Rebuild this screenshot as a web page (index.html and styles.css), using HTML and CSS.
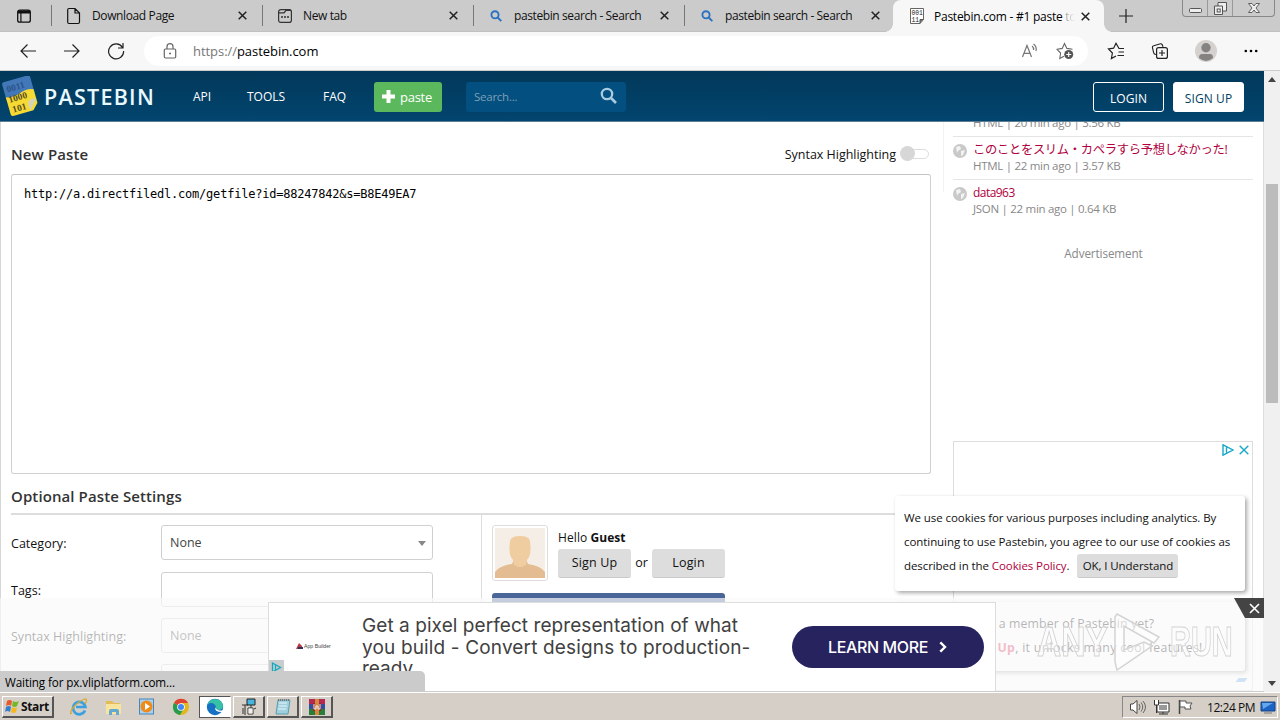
FILE: index.html
```html
<!DOCTYPE html>
<html lang="en">
<head>
<meta charset="utf-8">
<title>Pastebin.com - #1 paste tool</title>
<link rel="stylesheet" href="styles.css">
</head>
<body>
<div class="desktop">
  <div class="tabs">
    <svg class="tab-actions" width="16" height="16" viewBox="0 0 16 16"><rect x="1.700" y="2.200" width="12.600" height="12" rx="2" fill="none" stroke="#111" stroke-width="1.300"/><path d="M2 2.500h12v3H5.500V14H4.300V5.500H2z" fill="#111"/></svg>
    <div class="tab t1"><svg width="16" height="18" viewBox="0 0 16 18"><path d="M3 1.500h6l4.500 4.500v9q0 1.500-1.500 1.500h-9q-1.300 0-1.300-1.500V3q0-1.500 1.300-1.500zM9 1.700V6h4.500" fill="none" stroke="#111" stroke-width="1.200"/></svg><span class="tab-name">Download Page</span><svg class="x" width="9" height="9" viewBox="0 0 9 9"><path d="M.7.7l7.600 7.600M8.300.7L.7 8.300"/></svg></div>
    <div class="tab t2"><svg width="16" height="16" viewBox="0 0 16 16"><rect x="1.600" y="1.600" width="12.800" height="12.800" rx="2.200" fill="none" stroke="#333" stroke-width="1.200"/><path d="M2 4.800h5l2-2.500h5M4 9h2M7 9h2M10 9h2" fill="none" stroke="#333" stroke-width="1.300"/></svg><span class="tab-name">New tab</span><svg class="x" width="9" height="9" viewBox="0 0 9 9"><path d="M.7.7l7.600 7.600M8.300.7L.7 8.300"/></svg></div>
    <div class="tab t3"><svg width="16" height="16" viewBox="0 0 16 16"><circle cx="7" cy="6.800" r="3.600"/><path d="M9.700 9.500l3.600 3.600"/></svg><span class="tab-name">pastebin search - Search</span><svg class="x" width="9" height="9" viewBox="0 0 9 9"><path d="M.7.7l7.600 7.600M8.300.7L.7 8.300"/></svg></div>
    <div class="tab t3 t4"><svg width="16" height="16" viewBox="0 0 16 16"><circle cx="7" cy="6.800" r="3.600"/><path d="M9.700 9.500l3.600 3.600"/></svg><span class="tab-name">pastebin search - Search</span><svg class="x" width="9" height="9" viewBox="0 0 9 9"><path d="M.7.7l7.600 7.600M8.300.7L.7 8.300"/></svg></div>
    <div class="tab active"><svg width="16" height="16" viewBox="0 0 16 16"><path d="M1.500.5h13v11l-3.500 4h-9.500z" fill="#fff" stroke="#666"/><text x="2.400" y="7" class="bits">001</text><text x="2.400" y="13.500" class="bits">11</text><path d="M14.500 11.500h-3.500v4" fill="#777" stroke="#555"/></svg><span class="tab-name">Pastebin.com - #1 paste <i>to</i></span><svg class="x" width="9" height="9" viewBox="0 0 9 9"><path d="M.7.7l7.600 7.600M8.300.7L.7 8.300"/></svg></div>
    <svg class="plus" width="14" height="14" viewBox="0 0 14 14"><path d="M7 0v14M0 7h14" stroke="#222" stroke-width="1.200"/></svg>
    <div class="winbtns">
      <div class="wb"><svg width="13" height="5" viewBox="0 0 13 5"><rect x=".5" y=".5" width="12" height="4" rx="1" fill="#eee" stroke="#555"/></svg></div>
      <div class="wb"><svg width="13" height="13" viewBox="0 0 13 13"><path d="M4 .5h8.500v8.500H4z" fill="#eee" stroke="#555"/><path d="M.5 4h8v8.500h-8z" fill="#eee" stroke="#555"/><rect x="3.200" y="7" width="3" height="3" fill="none" stroke="#555"/></svg></div>
      <div class="wb wclose"><svg width="12" height="10" viewBox="0 0 12 10"><path d="M.5.5h3.500L6 3 8 .5h3.500L8 5l3.500 4.500H8L6 7 4 9.500H.5L4 5z" fill="#eee" stroke="#555" stroke-width=".9"/></svg></div>
    </div>
  </div>

  <div class="toolbar">
    <svg class="nav" width="18" height="16" viewBox="0 0 18 16"><path d="M8.500 1.500L2 8l6.500 6.500M2 8h15"/></svg>
    <svg class="nav" width="18" height="16" viewBox="0 0 18 16"><path d="M9.500 1.500L16 8l-6.500 6.500M16 8H1"/></svg>
    <svg class="nav" width="18" height="18" viewBox="0 0 18 18"><path d="M15.500 5.500A7.500 7.500 0 1 0 16.600 9M16 1v5h-5"/></svg>
    <div class="address">
      <svg class="lock" width="14" height="17" viewBox="0 0 14 17"><path d="M2.500 6h9q1.200 0 1.200 1.200v6.600q0 1.200-1.200 1.200h-9q-1.200 0-1.200-1.200V7.200Q1.300 6 2.500 6zM4 6V3.700a3 3 0 0 1 6 0V6" fill="none" stroke="#666" stroke-width="1.200"/><circle cx="7" cy="10.500" r="1" fill="#666"/></svg>
      <span class="url"><i>https://</i>pastebin.com</span>
      <svg class="aloud" width="18" height="16" viewBox="0 0 18 16"><path d="M1.500 14L6 2.500 10.500 14M3 10.300h6M11 3q2 1.500 1.500 4M12.500 1q3.500 2.500 2.500 7" fill="none" stroke="#777" stroke-width="1.200"/></svg>
      <svg width="18" height="18" viewBox="0 0 18 18"><path d="M8 14.300L3.800 16.500l.8-5.500L1 7.300l5.200-.9L8.500 1.500l2.400 4.900 5.600.9" fill="none" stroke="#666" stroke-width="1.100"/><circle cx="12.700" cy="12.500" r="4.500" fill="#555"/><path d="M12.700 10v5M10.200 12.500h5" stroke="#fff" stroke-width="1.100"/></svg>
    </div>
    <svg class="fav" width="18" height="18" viewBox="0 0 18 18"><path d="M17 6.500h-5L9 1.300 6.600 6.200 1.500 7l3.900 4-1 5.500L9 14M11.500 10H17M10.500 13.500H17" fill="none" stroke="#222" stroke-width="1.200"/></svg>
    <svg class="coll" width="18" height="18" viewBox="0 0 18 18"><path d="M5 12.500Q2.800 12.500 2.500 10L1.400 5.500Q1.200 4 2.700 3.700L9.500 1.800Q11.300 1.500 12 4.800" fill="none" stroke="#222" stroke-width="1.100"/><rect x="5.600" y="5.600" width="10.800" height="10.800" rx="2" fill="#f7f7f7" stroke="#222" stroke-width="1.200"/><path d="M11 8v6M8 11h6" stroke="#222" stroke-width="1.200"/></svg>
    <svg class="avatar" width="22" height="22" viewBox="0 0 22 22"><circle cx="11" cy="11" r="11" fill="#d4d1ce"/><circle cx="11" cy="7.800" r="4.700" fill="#858381"/><path d="M4 18q0-4 3-4h8q3 0 3 4-7 6-14 0z" fill="#858381"/></svg>
    <svg class="dots" width="14" height="4" viewBox="0 0 14 4"><circle cx="1.800" cy="2" r="1.300"/><circle cx="7" cy="2" r="1.300"/><circle cx="12.200" cy="2" r="1.300"/></svg>
  </div>

  <div class="browser">
    <div class="page">
      <header class="site-head">
        <svg class="logo" width="38" height="42" viewBox="0 0 38 42"><g transform="translate(1 -1) rotate(-16 19 21)"><path d="M4 5q0-2 2-2h25q2 0 2 2v16H4z" fill="#4277b8"/><path d="M4 18q7 3 15 0t14 0v14l-6 6H6q-2 0-2-2z" fill="#f6d932"/><path d="M33 27l-9 11v-7q0-4 4-4z" fill="#d3d2bd"/><text x="7" y="14" class="lb blue">0011</text><text x="6" y="24.500" class="lb">1000</text><text x="7" y="35" class="lb">101</text></g></svg>
        <span class="brand">PASTEBIN</span>
        <nav><span class="n1">API</span><span class="n2">TOOLS</span><span class="n3">FAQ</span></nav>
        <span class="paste-btn"><svg width="13" height="13" viewBox="0 0 13 13"><path d="M6.500 0v13M0 6.500h13" stroke="#fff" stroke-width="4"/></svg><b>paste</b></span>
        <span class="search"><span>Search...</span><svg width="17" height="17" viewBox="0 0 17 17"><circle cx="7" cy="7" r="5.200" fill="none" stroke="#a9cbe0" stroke-width="2.300"/><path d="M11 11l5 5" stroke="#a9cbe0" stroke-width="2.600"/></svg></span>
        <span class="hbtn">LOGIN</span><span class="hbtn solid">SIGN UP</span>
      </header>
      <div class="content">
        <main>
          <div class="title-row"><h2>New Paste</h2><span class="syn">Syntax Highlighting</span><span class="toggle"></span></div>
          <div class="code">http://a.directfiledl.com/getfile?id=88247842&amp;s=B8E49EA7</div>
          <h2 class="opt">Optional Paste Settings</h2>
          <div class="settings">
            <div class="form">
              <div class="row"><label>Category:</label><span class="select">None<i class="caret"></i></span></div>
              <div class="row"><label>Tags:</label><span class="select"></span></div>
              <div class="row"><label>Syntax Highlighting:</label><span class="select">None<i class="caret"></i></span></div>
              <div class="row"><label></label><span class="select"></span></div>
            </div>
            <div class="guest">
              <div class="who">
                <span class="pic"><svg width="50" height="50" viewBox="0 0 50 50"><path d="M0 0h50v50H0z" fill="#f5eee6"/><path d="M0 50v-6q4-6 17-8l2-5h12l2 5q13 2 17 8v6z" fill="#e3bd91"/><path d="M15 13q1-5 10-5t10 5q2 15-3 19l-1 5q-6 4-12 0l-1-5q-5-4-3-19z" fill="#f0cda0"/></svg></span>
                <div class="greet"><div class="hello">Hello <b>Guest</b></div><div class="gbtns"><span class="btn">Sign Up</span><em>or</em><span class="btn">Login</span></div></div>
              </div>
              <div class="social"></div>
            </div>
          </div>
        </main>
        <aside>
          <div class="item cut"><span class="meta">HTML | 20 min ago | 3.56 KB</span></div>
          <div class="item"><svg width="14" height="14" viewBox="0 0 14 14"><circle cx="7" cy="7" r="7" fill="#c9c9c9"/><path d="M3 3l4-1 1 3-3 2-1 2zM8 7l4-1-2 5-2 1z" fill="#f3f3f3"/></svg><div><div class="name ja">このことをスリム・カペラすら予想しなかった!</div><div class="meta">HTML | 22 min ago | 3.57 KB</div></div></div>
          <div class="item last"><svg width="14" height="14" viewBox="0 0 14 14"><circle cx="7" cy="7" r="7" fill="#c9c9c9"/><path d="M3 3l4-1 1 3-3 2-1 2zM8 7l4-1-2 5-2 1z" fill="#f3f3f3"/></svg><div><div class="name">data963</div><div class="meta">JSON | 22 min ago | 0.64 KB</div></div></div>
          <div class="adv">Advertisement</div>
          <div class="adbox"><svg width="12" height="12" viewBox="0 0 12 12"><path d="M1 .8v10.400L11 6zM4.500 3.500v5" fill="none" stroke="#18a8c8" stroke-width="1.400"/></svg><svg width="10" height="10" viewBox="0 0 10 10"><path d="M.7.7l8.600 8.600M9.300.7L.7 9.300" stroke="#18a8c8" stroke-width="1.400"/></svg></div>
        </aside>
      </div>

      <div class="notice member"><div class="m1">Not a member of Pastebin yet?</div><div class="m2"><b>Sign Up</b>, it unlocks many cool features!</div></div>
      <div class="strip">
        <div class="ad">
          <div class="ad-logo"><svg width="7" height="6" viewBox="0 0 7 6"><path d="M0 6l3-6 3 3v3z" fill="#b23a45"/><path d="M2 4h5v2H2z" fill="#33305e"/></svg>App Builder</div>
          <svg class="choices" width="15" height="15" viewBox="0 0 15 15"><path d="M0 0h15v15H0z" fill="#c8cccd"/><path d="M3.500 3v9l8-4.500zM6.500 5v5" fill="none" stroke="#12a9bf" stroke-width="1.300"/></svg>
          <div class="ad-text"><div class="l1">Get a pixel perfect representation of what</div><div class="l2">you build - Convert designs to production-</div><div class="l3">ready</div></div>
          <div class="learn"><span>LEARN MORE</span><svg width="8" height="12" viewBox="0 0 8 12"><path d="M1.300 1.300L6 6l-4.700 4.700" fill="none" stroke="#fff" stroke-width="2.400"/></svg></div>
        </div>
        <div class="close"><svg width="11" height="11" viewBox="0 0 11 11"><path d="M1 1l9 9M10 1l-9 9" stroke="#fff" stroke-width="1.600"/></svg></div>
        <span class="speck"></span>
        <div class="mark"><span class="any">ANY</span><svg width="56" height="62" viewBox="0 0 56 62"><path d="M7 3l42 23-5 6-30-17v24L34 31l8 4L7 59l-2-8V6z" fill="#fff" fill-opacity=".45" stroke="#d4d4d4" stroke-width="1.500"/></svg><span class="run">RUN</span></div>
      </div>
      <div class="notice cookies"><div class="c1">We use cookies for various purposes including analytics. By</div><div class="c2">continuing to use Pastebin, you agree to our use of cookies as</div><div class="c3">described in the <a>Cookies Policy</a>. <span class="ok">OK, I Understand</span></div></div>
      <div class="status">Waiting for px.vliplatform.com...</div>
    </div>
    <div class="scroll"><i class="up"></i><div class="thumb"></div><i class="down"></i></div>
  </div>

  <div class="taskbar">
    <div class="start"><svg width="15" height="15" viewBox="0 0 15 15"><path d="M2 2q3-2 5 0L6 7Q4 5 1 7z" fill="#e75a2d"/><path d="M8 2q3 2 6 0l-2 5q-2 2-5 0z" fill="#76b72a"/><path d="M1 8q3-2 5 0l-1 5q-3-2-5 0z" fill="#367fd0"/><path d="M7 8q3 2 5 0l-1 5q-3 2-5 0z" fill="#f6b91d"/></svg>Start</div>
    <div class="quick">
      <svg width="18" height="18" viewBox="0 0 18 18"><path d="M15 12.500A6.200 6.200 0 1 1 15.400 9H6" fill="none" stroke="#3ba0df" stroke-width="2.700"/><path d="M2 15Q-1 17 2 11 8 3 15 1q3 0 0 5" fill="none" stroke="#dba832" stroke-width="1.300"/></svg>
      <svg width="18" height="18" viewBox="0 0 18 18"><path d="M2 3h6l2 2h6v10H2z" fill="#e3bc58"/><path d="M2 6h15v10H2z" fill="#f8e49c"/><path d="M5 17v-4q0-2 2-2h6q2 0 2 2v4h-3v-3H8v3z" fill="#64a9d2"/></svg>
      <svg width="18" height="18" viewBox="0 0 18 18"><rect x="1.500" y="1" width="14" height="15" fill="#a8d0ef" stroke="#4b86b7"/><circle cx="8.500" cy="8.500" r="6" fill="#ee8b19"/><path d="M7 5v7l5-3.500z" fill="#fff"/></svg>
      <svg width="18" height="18" viewBox="0 0 18 18"><circle cx="9" cy="9" r="8" fill="#e2b71e"/><path d="M9 9L2 5a8 8 0 0 1 14 0H9z" fill="#de4333"/><path d="M2 5a8 8 0 0 0 6 12l4-7-3-1z" fill="#269c51"/><circle cx="9" cy="9" r="3.800" fill="#fff"/><circle cx="9" cy="9" r="3" fill="#4285f4"/></svg>
    </div>
    <div class="task on"><svg width="18" height="18" viewBox="0 0 18 18"><circle cx="9" cy="9" r="8.200" fill="#1671c4"/><path d="M1 8Q3 1 9 1q7 0 8 7 0 4-5 4-3 0-2-3-1-4-5-4-3 0-4 3z" fill="#37c1a5"/><path d="M9 9q-1 5 7 5 1-1 1-2-2 1-5 0-3-1-3-3z" fill="#fff"/></svg></div>
    <div class="task"><svg width="18" height="18" viewBox="0 0 18 18"><path d="M7 1h8v6H7z" fill="#46b5e0" stroke="#222"/><path d="M2 7h6M5 7v10M3 10v6M8 10h5v6H8zM11 7v3M14 11l2-1" fill="none" stroke="#333"/><path d="M8.500 10.500h4v5h-4z" fill="#eee"/></svg></div>
    <div class="task"><svg width="18" height="18" viewBox="0 0 18 18"><path d="M4 2h12l-2 14H2z" fill="#9fd0df" stroke="#5e9cae"/><path d="M5 5h8M5 8h8M4 11h8" stroke="#eaf6fa"/><path d="M4 2h12" stroke="#777" stroke-width="2" stroke-dasharray="1 1"/></svg></div>
    <div class="task"><svg width="18" height="18" viewBox="0 0 18 18"><path d="M1 1h16v5H1z" fill="#b32952"/><path d="M1 6h16v5H1z" fill="#334e9e"/><path d="M1 11h16v6H1z" fill="#287d3a"/><path d="M5 5h8v8H5z" fill="#9c2230"/><path d="M7 1h4v16H7z" fill="#d7883a"/><path d="M6 6v5h2V8h2v3h2V6" fill="none" stroke="#eee"/></svg></div>
    <div class="tray">
      <svg width="18" height="16" viewBox="0 0 18 16"><path d="M1.500 5H4l4-3.500v13L4 11H1.500z" fill="#fff" stroke="#444"/><path d="M10 5q2 3 0 6M12 3.500q3.500 4.500 0 9M14 2q5 6 0 12" fill="none" stroke="#666"/></svg>
      <svg width="18" height="16" viewBox="0 0 18 16"><path d="M4 4h12v9H4z" fill="#fff" stroke="#333"/><path d="M6 6h8v5H6z" fill="#999"/><path d="M6 15h9M10 13v2" stroke="#333"/><path d="M1.500 1v5h4V1M3.500 6v8" fill="#fff" stroke="#333"/></svg>
      <svg width="18" height="16" viewBox="0 0 18 16"><path d="M2.500 1v14" stroke="#444" stroke-width="1.500"/><path d="M3 2h6v2h6l-2 3 1 3H8V8H3z" fill="#fff" stroke="#555"/></svg>
      <span class="clock">12:24 PM</span>
      <svg class="mon" width="16" height="14" viewBox="0 0 16 14"><path d="M1 2h14v9H1z" fill="#1d63c5" stroke="#174585"/><path d="M2 3h11L3 9z" fill="#64a7eb"/><path d="M4 13h8" stroke="#777"/></svg>
    </div>
  </div>
</div>
</body>
</html>
```

FILE: styles.css
```css
* { box-sizing: border-box; }
body { margin: 0; font-family: "Open Sans", "Noto Sans CJK JP", sans-serif; font-size: 12px; color: #111; }
svg { display: block; flex: none; }
i { font-style: normal; }
.desktop { width: 1280px; height: 720px; display: flex; flex-direction: column; overflow: hidden; background: #fff; white-space: nowrap; }

/* Tab strip */
.tabs { height: 32px; flex: none; background: #cbcbcb; display: flex; align-items: center; border-bottom: 1px solid #c0c0c0; }
.tab-actions { margin-left: 16px; }
.tab { height: 21px; display: flex; align-items: center; border-left: 1px solid #777; padding-left: 14px; width: 211px; position: relative; }
.t1 { margin-left: 19px; }
.t3 svg:first-child { margin-right: 3px; }
.t3 circle, .t3 svg:first-child path { fill: none; stroke: #2b73c0; stroke-width: 1.9; }
.tab-name { margin-left: 10px; letter-spacing: -.38px; flex: 1; }
.t3 .tab-name { letter-spacing: -.4px; margin-left: 7px; }
.x { margin-right: 15px; }
.x path { stroke: #222; stroke-width: 1.5; }
.t4 { width: 209px; }
.t4 .x { margin-right: 13px; }
.active { height: 32px; width: 211px; background: #f7f7f7; border: 0; border-radius: 8px 8px 0 0; padding-left: 16px; margin-bottom: -1px; }
.active .tab-name { margin-left: 9px; letter-spacing: -.25px; color: #000; }
.active .x { margin-right: 14px; }
.active .tab-name i { background: linear-gradient(90deg, #999, #f7f7f7 90%); -webkit-background-clip: text; background-clip: text; color: transparent; }
.active::before, .active::after { content: ""; position: absolute; bottom: 0; width: 8px; height: 8px; }
.active::before { left: -8px; background: radial-gradient(circle at 0 0, transparent 7.5px, #f7f7f7 8px); }
.active::after { right: -8px; background: radial-gradient(circle at 100% 0, transparent 7.5px, #f7f7f7 8px); }
.bits { font: 400 6.3px "Liberation Mono", monospace; fill: #222; }
.plus { margin-left: 15px; }
.winbtns { margin-left: 49px; align-self: flex-start; height: 17px; width: 93px; display: flex; border: 1px solid #888; border-top: 0; border-radius: 0 0 4px 4px; }
.wb { width: 25px; display: flex; align-items: center; justify-content: center; border-right: 1px solid #999; }
.wb:first-child { align-items: flex-end; padding-bottom: 3px; }
.wclose { flex: 1; border: 0; }

/* Toolbar */
.toolbar { height: 39px; flex: none; background: #f7f7f7; border-bottom: 1px solid #ccc; display: flex; align-items: center; padding: 0 21px 0 19px; }
.nav { margin-right: 26px; }
.nav path { fill: none; stroke: #222; stroke-width: 1.2; }
.address { width: 944px; height: 30px; background: #fff; border-radius: 15px; display: flex; align-items: center; padding: 0 14px 0 19px; margin-left: -7px; }
.url { font-size: 13px; margin-left: 16px; flex: 1; letter-spacing: -.05px; color: #000; }
.url i { color: #777; }
.aloud { margin-right: 17px; }
.fav { margin-left: 19px; }
.coll { margin-left: 26px; }
.avatar { margin-left: 26px; }
.dots { margin-left: 27px; }

/* Web page */
.browser { flex: 1; display: flex; min-height: 0; }
.page { width: 1264px; position: relative; overflow: hidden; background: #fff; border-bottom: 1px solid #ccc; display: flex; flex-direction: column; }
.site-head { height: 51px; flex: none; background: linear-gradient(#023859, #02456f); border-bottom: 1px solid #5b7d93; display: flex; align-items: center; color: #fff; padding: 1px 20px 0 1px; }
.brand { font-size: 21.5px; font-weight: 600; margin-left: 5px; width: 123px; letter-spacing: 1.25px; color: #e9faff; }
.lb { font: 700 9.5px "Liberation Serif", serif; fill: #594e25; }
.blue { fill: #2b5489; }
nav { display: flex; margin-left: 26px; }
nav span { letter-spacing: 0; margin-top: -1px; }
.n1 { width: 54px; } .n2 { width: 76px; } .n3 { width: 51px; }
.paste-btn { width: 68px; height: 30px; border-radius: 3px; background: #5cb85c; display: flex; align-items: center; padding-left: 8px; gap: 5px; }
.paste-btn b { font-weight: 400; font-size: 13px; letter-spacing: -.25px; }
.search { width: 160px; height: 30px; margin-left: 24px; border-radius: 3px; background: #024f80; display: flex; align-items: center; justify-content: space-between; padding: 0 9px 0 8px; color: #7f9fb6; font-size: 11.5px; margin-right: auto; letter-spacing: -.25px; }
.search svg { margin-top: -2px; }
.hbtn { width: 71px; height: 30px; border: 1px solid #fff; border-radius: 3px; text-align: center; line-height: 31px; letter-spacing: .1px; }
.hbtn.solid { background: #fff; color: #023f65; margin-left: 9px; }
.content { display: flex; flex: 1; min-height: 0; overflow: hidden; border-left: 1px solid #d6d6d6; border-right: 1px solid #ddd; }
main { width: 930px; padding: 20px 0 0 10px; flex: none; }
h2 { font-size: 15px; font-weight: 600; margin: 0; color: #333; letter-spacing: .1px; line-height: 24px; }
.title-row { display: flex; align-items: center; height: 24px; }
.title-row h2 { flex: 1; }
.syn { font-size: 12.5px; letter-spacing: -.02px; }
.toggle { width: 27px; height: 10px; border: 1px solid #ddd; border-radius: 6px; margin: 0 2px 0 6px; position: relative; }
.toggle::before { content: ""; position: absolute; left: -3px; top: -4px; width: 15px; height: 15px; border-radius: 50%; background: #d7d7d7; }
.code { margin-top: 8px; height: 300px; border: 1px solid #d0d0d0; border-top-color: #c4c4c4; border-radius: 3px; padding: 12px; font: 12px/15px "DejaVu Sans Mono", monospace; letter-spacing: -.22px; color: #000; }
.opt { height: 41px; padding-top: 10px; border-bottom: 2px solid #ddd; }
.settings { display: flex; }
.form { width: 471px; padding-top: 10px; border-right: 1px solid #ddd; height: 230px; }
.row { display: flex; height: 47px; }
.row + .row { height: 46px; }
.row label { width: 150px; line-height: 37px; letter-spacing: .02px; font-size: 12.5px; }
.select { width: 272px; height: 35px; border: 1px solid #d0d0d0; border-radius: 3px; padding-left: 8px; line-height: 33px; color: #444; font-size: 12.5px; position: relative; }
.caret { position: absolute; right: 6px; top: 15px; border: 4px solid transparent; border-top: 5px solid #888; border-bottom: 0; }
.guest { padding: 10px 0 0 10px; }
.who { display: flex; gap: 10px; }
.pic { width: 56px; height: 56px; border: 1px solid #ddd; border-radius: 3px; padding: 2px; }
.hello { line-height: 25px; height: 24px; letter-spacing: .1px; }
.hello b { letter-spacing: 0; }
.gbtns { display: flex; font-size: 12.5px; }
.gbtns em { font-style: normal; width: 21px; text-align: center; line-height: 28px; }
.btn { width: 73px; height: 29px; background: #ddd; border-bottom: 1px solid #c9c9c9; border-radius: 3px; text-align: center; line-height: 28px; letter-spacing: .15px; }
.social { margin-top: 12px; width: 233px; height: 40px; background: #4a6698; border-radius: 3px; }
aside { margin-left: 12px; padding-left: 10px; width: 311px; background: linear-gradient(#f3f3f3, #f3f3f3) 0 0 / 1px 70px no-repeat; }
.item { width: 300px; height: 43px; border-bottom: 1px solid #e5e5e5; display: flex; gap: 6px; padding-top: 7px; line-height: 16px; }
.item.cut { height: 15px; padding: 0 0 0 20px; overflow: hidden; }
.cut .meta { margin-top: -7px; }
.item.last { border: 0; }
.name { color: #b00040; letter-spacing: -.55px; height: 16px; margin-top: -2px; }
.ja { font-size: 12.3px; letter-spacing: -.32px; }
.meta { color: #888; letter-spacing: -.29px; font-size: 11.5px; }
.adv { text-align: center; color: #888; letter-spacing: -.1px; margin: 21px 0 0; width: 301px; line-height: 18px; font-size: 11.7px; }
.adbox { margin-top: 179px; width: 300px; height: 250px; border: 1px solid #ddd; display: flex; justify-content: flex-end; gap: 5px; padding: 2px 3px; }
.adbox svg:last-child { margin-top: 1px; }

/* Layers that float over the page */
.notice { position: absolute; right: 19px; width: 350px; background: #fff; border-radius: 3px; box-shadow: 2px 2px 4px rgba(0,0,0,.35); padding: 10px; line-height: 24px; font-size: 11.5px; }
.cookies { top: 425px; height: 95px; padding-left: 9px; }
.c1 { letter-spacing: -.07px; } .c2 { letter-spacing: -.07px; } .c3 { letter-spacing: -.08px; }
.cookies a { color: #b00040; }
.ok { display: inline-block; background: #ddd; border-radius: 3px; height: 24px; width: 101px; text-align: center; margin-left: 5px; border-bottom: 1px solid #c9c9c9; }
.member { top: 531px; height: 69px; font-size: 12.3px; padding-left: 79px; }
.m1 { letter-spacing: .12px; }
.m2 { margin-left: -7px; letter-spacing: .33px; }
.member b { color: #e03060; }
.strip { position: absolute; left: 0; right: 0; top: 527px; height: 94px; background: rgba(250,250,250,.7); }
.ad { position: absolute; left: 268px; top: 4px; width: 728px; height: 90px; background: #fff; border: 1px solid #ddd; border-bottom: 0; overflow: hidden; display: flex; }
.ad-logo { width: 93px; padding: 40px 0 0 27px; font: 5.2px/7px "Liberation Sans", sans-serif; display: flex; gap: 1px; color: #444; }
.choices { position: absolute; left: 0; top: 57px; }
.ad-text { width: 430px; font: 19px/21.5px Inter, sans-serif; color: #414141; padding-top: 12px; }
.l1 { letter-spacing: .07px; }
.l2 { letter-spacing: .15px; }
.learn { width: 192px; height: 42px; margin-top: 23px; border-radius: 21px; background: #27235f; color: #fff; font: 500 16px/42px Inter, sans-serif; display: flex; align-items: center; padding-left: 36px; gap: 11px; letter-spacing: -.37px; }
.close { position: absolute; right: 0; top: 0; width: 30px; height: 20px; background: #444; clip-path: polygon(0 0, 100% 0, 100% 100%, 11px 100%); display: flex; align-items: center; justify-content: flex-end; padding-right: 4px; }
.speck { position: absolute; left: 1237px; top: 80px; width: 9px; height: 4px; background: #cfe3f5; transform: skewX(-35deg); }
.mark { position: absolute; left: 1037px; top: 11px; width: 200px; height: 66px; display: flex; align-items: center; color: rgba(255,255,255,.4); font: 700 42px/60px "Liberation Sans", sans-serif; -webkit-text-stroke: 1px #d2d2d2; }
.mark span { display: block; transform-origin: 0 50%; }
.any { width: 73px; transform: scaleX(.8); }
.run { width: 62px; transform: scaleX(.69); margin-left: 4px; }
.status { position: absolute; left: 0; top: 600px; width: 425px; height: 21px; background: #cbcbcb; border-radius: 0 5px 0 0; padding-left: 5px; line-height: 22px; letter-spacing: -.12px; font-size: 11.7px; color: #000; }

.scroll { width: 16px; background: #f0f0f0; display: flex; flex-direction: column; align-items: center; }
.up { border: 4px solid transparent; border-bottom: 5px solid #444; border-top: 0; margin-top: 6px; }
.thumb { width: 12px; height: 219px; background: #bcbcbc; margin-top: 102px; }
.down { border: 4px solid transparent; border-top: 5px solid #444; border-bottom: 0; margin-top: auto; margin-bottom: 6px; }

/* Taskbar */
.taskbar { height: 28px; flex: none; background: #d5cfc7; border-top: 1px solid #fff; display: flex; align-items: center; padding: 1px 2px 0 2px; }
.start { width: 52px; height: 22px; border: 1px solid #fff; border-right: 2px solid #555; border-bottom: 2px solid #555; display: flex; align-items: center; font-weight: 700; font-size: 12px; padding-left: 2px; gap: 1px; letter-spacing: -.35px; }
.quick { display: flex; gap: 16px; margin-left: 16px; width: 129px; }
.task { width: 32px; height: 22px; margin-right: 2px; border: 1px solid #fff; border-right: 2px solid #555; border-bottom: 2px solid #555; display: flex; align-items: center; justify-content: center; }
.task.on { background: #fff; border: 1px solid #555; border-right-color: #fff; }
.tray { margin-left: auto; width: 156px; height: 22px; border: 1px solid #888; border-right-color: #fff; border-bottom-color: #fff; display: flex; align-items: center; padding-left: 6px; gap: 6px; }
.clock { font-size: 12px; letter-spacing: -.45px; margin-left: 6px; width: 46px; }
.mon { margin-left: 1px; }
```
